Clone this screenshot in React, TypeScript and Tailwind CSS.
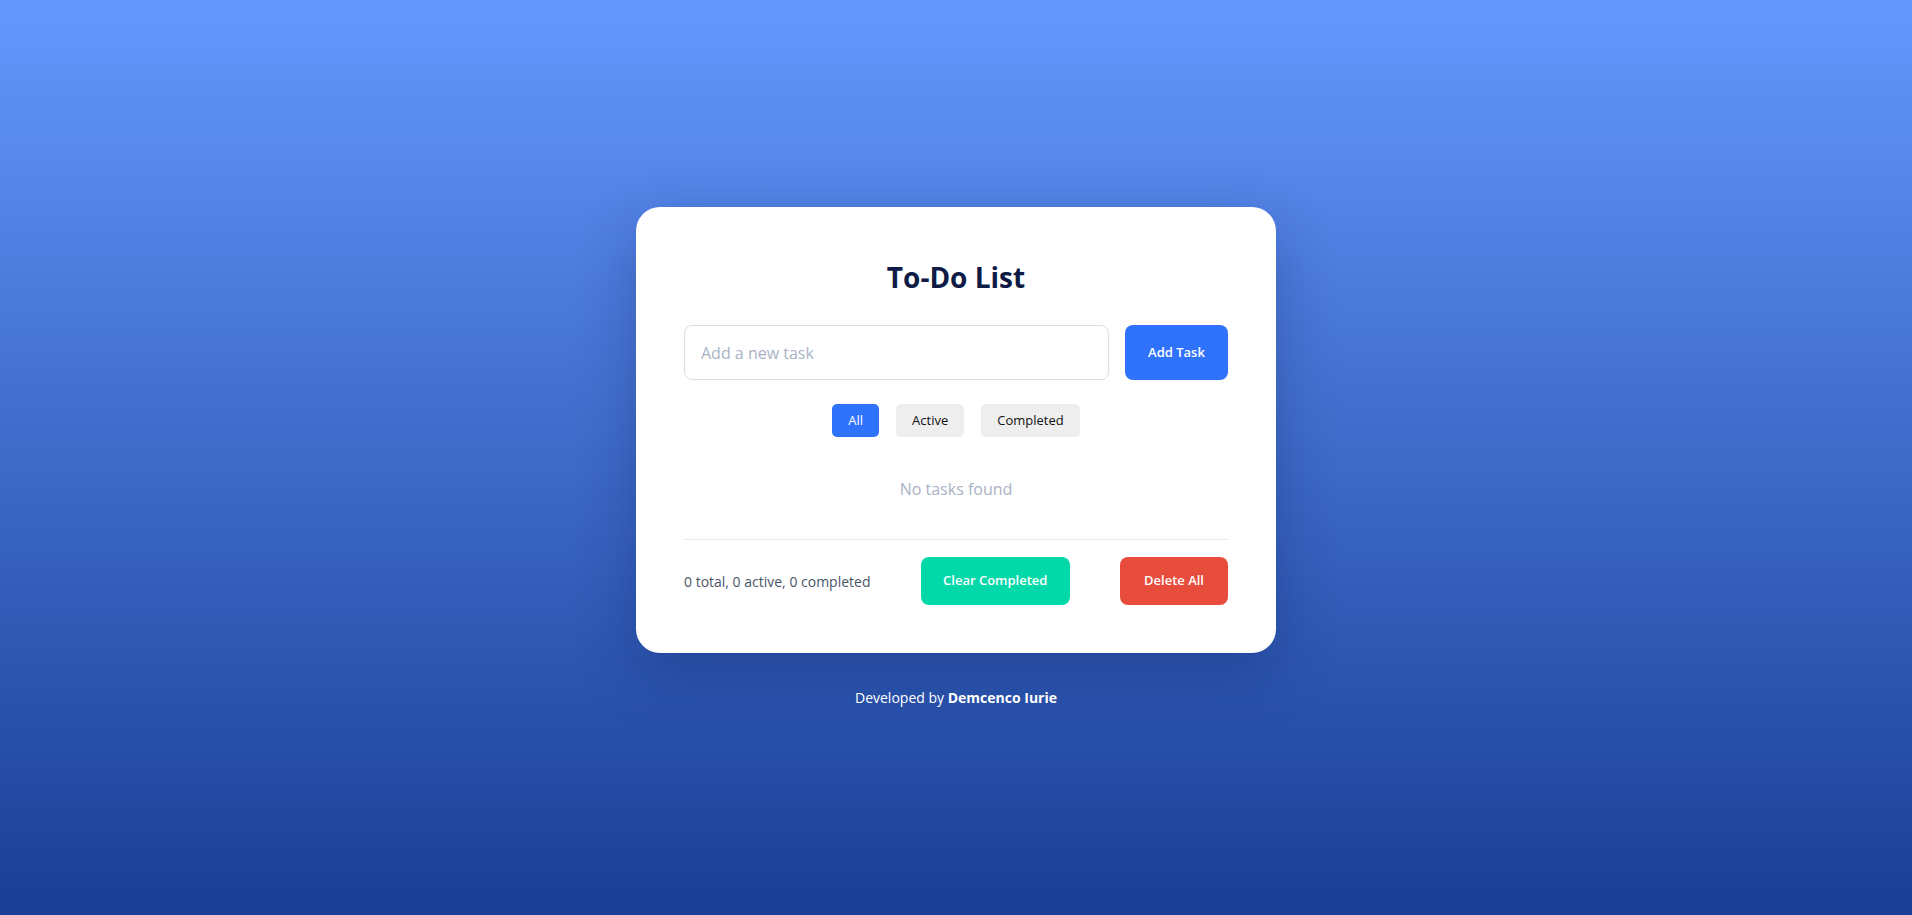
import { useState } from "react";

type Filter = "all" | "active" | "completed";

export default function App() {
  const [filter, setFilter] = useState<Filter>("all");
  const [text, setText] = useState("");

  const filterBtn = (key: Filter, label: string) => (
    <button
      type="button"
      onClick={() => setFilter(key)}
      className={
        filter === key
          ? "h-[33px] rounded-[5px] bg-[#2f72fc] px-[16px] text-[13px] text-white"
          : "h-[33px] rounded-[5px] bg-[#eeeeee] px-[16px] text-[13px] text-[#111111]"
      }
    >
      {label}
    </button>
  );

  return (
    <div
      className="flex min-h-screen flex-col items-center justify-center bg-gradient-to-b from-[#6598fe] to-[#1a3e95]"
      style={{ fontFamily: "'Open Sans', 'Noto Sans', sans-serif" }}
    >
      <div className="w-[640px] rounded-3xl bg-white p-12 shadow-[0_20px_60px_rgba(10,30,90,0.3)]">
        <h1 className="text-center text-[28px] leading-[44px] font-bold text-[#0d1b45]">To-Do List</h1>

        <div className="mt-[26px] flex gap-4">
          <input
            value={text}
            onChange={(e) => setText(e.target.value)}
            placeholder="Add a new task"
            className="h-[55px] flex-1 rounded-lg border border-[#dddddd] px-4 text-[16px] text-[#222] outline-none placeholder:text-[#a9b3c4]"
          />
          <button
            type="button"
            className="h-[55px] w-[103px] rounded-lg bg-[#2f72fc] text-[13px] font-semibold text-white"
          >
            Add Task
          </button>
        </div>

        <div className="mt-6 flex justify-center gap-[17px]">
          {filterBtn("all", "All")}
          {filterBtn("active", "Active")}
          {filterBtn("completed", "Completed")}
        </div>

        <p className="pt-[40px] pb-[38px] text-center text-[16px] text-[#a9b3c4]">No tasks found</p>

        <div className="flex items-center justify-between border-t border-[#e8e8e8] pt-[17px]">
          <span className="text-[14px] text-[#4a5568]">0 total, 0 active, 0 completed</span>
          <button
            type="button"
            className="h-12 w-[149px] rounded-lg bg-[#03d8a8] text-[13px] font-semibold text-white"
          >
            Clear Completed
          </button>
          <button
            type="button"
            className="h-12 w-[108px] rounded-lg bg-[#e74c3c] text-[13px] font-semibold text-white"
          >
            Delete All
          </button>
        </div>
      </div>

      <p className="mt-[34px] text-[14px] text-white">
        Developed by <span className="font-bold">Demcenco Iurie</span>
      </p>
    </div>
  );
}
